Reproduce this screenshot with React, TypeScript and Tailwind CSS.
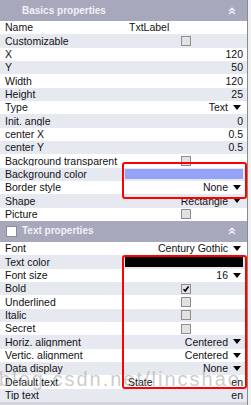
import React from 'react';

type Value =
  | { kind: 'text'; v: string }
  | { kind: 'num'; v: string }
  | { kind: 'check'; on?: boolean }
  | { kind: 'drop'; v: string }
  | { kind: 'color'; c: string }
  | { kind: 'pair'; a: string; b: string };

interface Row {
  label: string;
  value: Value;
}

const basics: Row[] = [
  { label: 'Name', value: { kind: 'text', v: 'TxtLabel' } },
  { label: 'Customizable', value: { kind: 'check' } },
  { label: 'X', value: { kind: 'num', v: '120' } },
  { label: 'Y', value: { kind: 'num', v: '50' } },
  { label: 'Width', value: { kind: 'num', v: '120' } },
  { label: 'Height', value: { kind: 'num', v: '25' } },
  { label: 'Type', value: { kind: 'drop', v: 'Text' } },
  { label: 'Init. angle', value: { kind: 'num', v: '0' } },
  { label: 'center X', value: { kind: 'num', v: '0.5' } },
  { label: 'center Y', value: { kind: 'num', v: '0.5' } },
  { label: 'Background transparent', value: { kind: 'check' } },
  { label: 'Background color', value: { kind: 'color', c: 'bg-[#94a3f8]' } },
  { label: 'Border style', value: { kind: 'drop', v: 'None' } },
  { label: 'Shape', value: { kind: 'drop', v: 'Rectangle' } },
  { label: 'Picture', value: { kind: 'check' } },
];

const textProps: Row[] = [
  { label: 'Font', value: { kind: 'drop', v: 'Century Gothic' } },
  { label: 'Text color', value: { kind: 'color', c: 'bg-black' } },
  { label: 'Font size', value: { kind: 'drop', v: '16' } },
  { label: 'Bold', value: { kind: 'check', on: true } },
  { label: 'Underlined', value: { kind: 'check' } },
  { label: 'Italic', value: { kind: 'check' } },
  { label: 'Secret', value: { kind: 'check' } },
  { label: 'Horiz. alignment', value: { kind: 'drop', v: 'Centered' } },
  { label: 'Vertic. alignment', value: { kind: 'drop', v: 'Centered' } },
  { label: 'Data display', value: { kind: 'drop', v: 'None' } },
  { label: 'Default text', value: { kind: 'pair', a: 'State', b: 'en' } },
  { label: 'Tip text', value: { kind: 'num', v: 'en' } },
];

function Arrow() {
  return (
    <svg width="8" height="5" viewBox="0 0 8 5" className="ml-[5px] shrink-0">
      <path d="M0 0H8L4 5Z" fill="#000" />
    </svg>
  );
}

function Check({ on }: { on?: boolean }) {
  return (
    <div className="w-[10px] h-[10px] border border-[#8e8e8e] bg-[#e2e2e2] flex items-center justify-center">
      {on && (
        <svg width="8" height="8" viewBox="0 0 8 8">
          <path d="M1.5 4.2L3.2 6L6.6 1.5" stroke="#000" strokeWidth="1.6" fill="none" />
        </svg>
      )}
    </div>
  );
}

function Cell({ value }: { value: Value }) {
  switch (value.kind) {
    case 'text':
      return <div className="pl-[4px]">{value.v}</div>;
    case 'num':
      return <div className="w-full text-right pr-[4px]">{value.v}</div>;
    case 'check':
      return (
        <div className="w-full flex justify-center">
          <Check on={value.on} />
        </div>
      );
    case 'drop':
      return (
        <div className="w-full flex items-center justify-end pr-[6px]">
          <span>{value.v}</span>
          <Arrow />
        </div>
      );
    case 'color':
      return <div className={`w-full h-[10px] mr-[4px] ${value.c}`} />;
    case 'pair':
      return (
        <div className="w-full flex justify-between pl-[3px] pr-[4px]">
          <span>{value.a}</span>
          <span>{value.b}</span>
        </div>
      );
  }
}

function Chevrons() {
  return (
    <svg width="8" height="8" viewBox="0 0 8 8">
      <path d="M1 4L4 1.2L7 4M1 7L4 4.2L7 7" stroke="#eceef6" strokeWidth="1.3" fill="none" />
    </svg>
  );
}

function Section({ title, rows, box }: { title: string; rows: Row[]; box?: boolean }) {
  return (
    <div className="flex flex-col">
      <div className="h-[21px] bg-[#a8a8bd] flex items-center pr-[11px]">
        <div className="w-[22px] flex justify-center">
          {box && <div className="w-[11px] h-[11px] bg-white border border-[#8a8a9c]" />}
        </div>
        <span className="font-bold text-[10px] text-[#f1f1f7] flex-1">{title}</span>
        <Chevrons />
      </div>
      {rows.map((row, i) => (
        <div
          key={row.label}
          className={`h-[13.333px] grid grid-cols-[125px_1fr] items-center ${
            i % 2 === 0 ? 'bg-white' : 'bg-[#e7e9f1]'
          }`}
        >
          <div className="pl-[5px] whitespace-nowrap overflow-hidden">{row.label}</div>
          <div className="flex items-center h-full">
            <Cell value={row.value} />
          </div>
        </div>
      ))}
    </div>
  );
}

export default function App() {
  return (
    <div className="w-[251px] h-[405px] relative overflow-hidden bg-white flex font-['Liberation_Sans',Arial,sans-serif] text-[10.5px] leading-none text-[#111]">
      <div className="w-[247px] flex flex-col">
        <Section title="Basics properties" rows={basics} />
        <Section title="Text properties" rows={textProps} box />
        <div className="flex-1 bg-[#d4d4dc]" />
      </div>
      <div className="w-[4px] border-l border-[#8a8a8a] bg-[#f2f2f2]" />

      {/* watermark */}
      <div className="absolute right-[10px] top-[369px] whitespace-nowrap text-[20px] tracking-[2px] text-[#9c9c9c] opacity-50 pointer-events-none">
        blog.csdn.net/lincshao
      </div>

      {/* red highlight boxes */}
      <div className="absolute left-[122px] top-[162px] w-[125px] h-[37px] border-2 border-[#f00] rounded-[3px] pointer-events-none" />
      <div className="absolute left-[122px] top-[255px] w-[125px] h-[134px] border-2 border-[#f00] rounded-[3px] pointer-events-none" />
    </div>
  );
}
